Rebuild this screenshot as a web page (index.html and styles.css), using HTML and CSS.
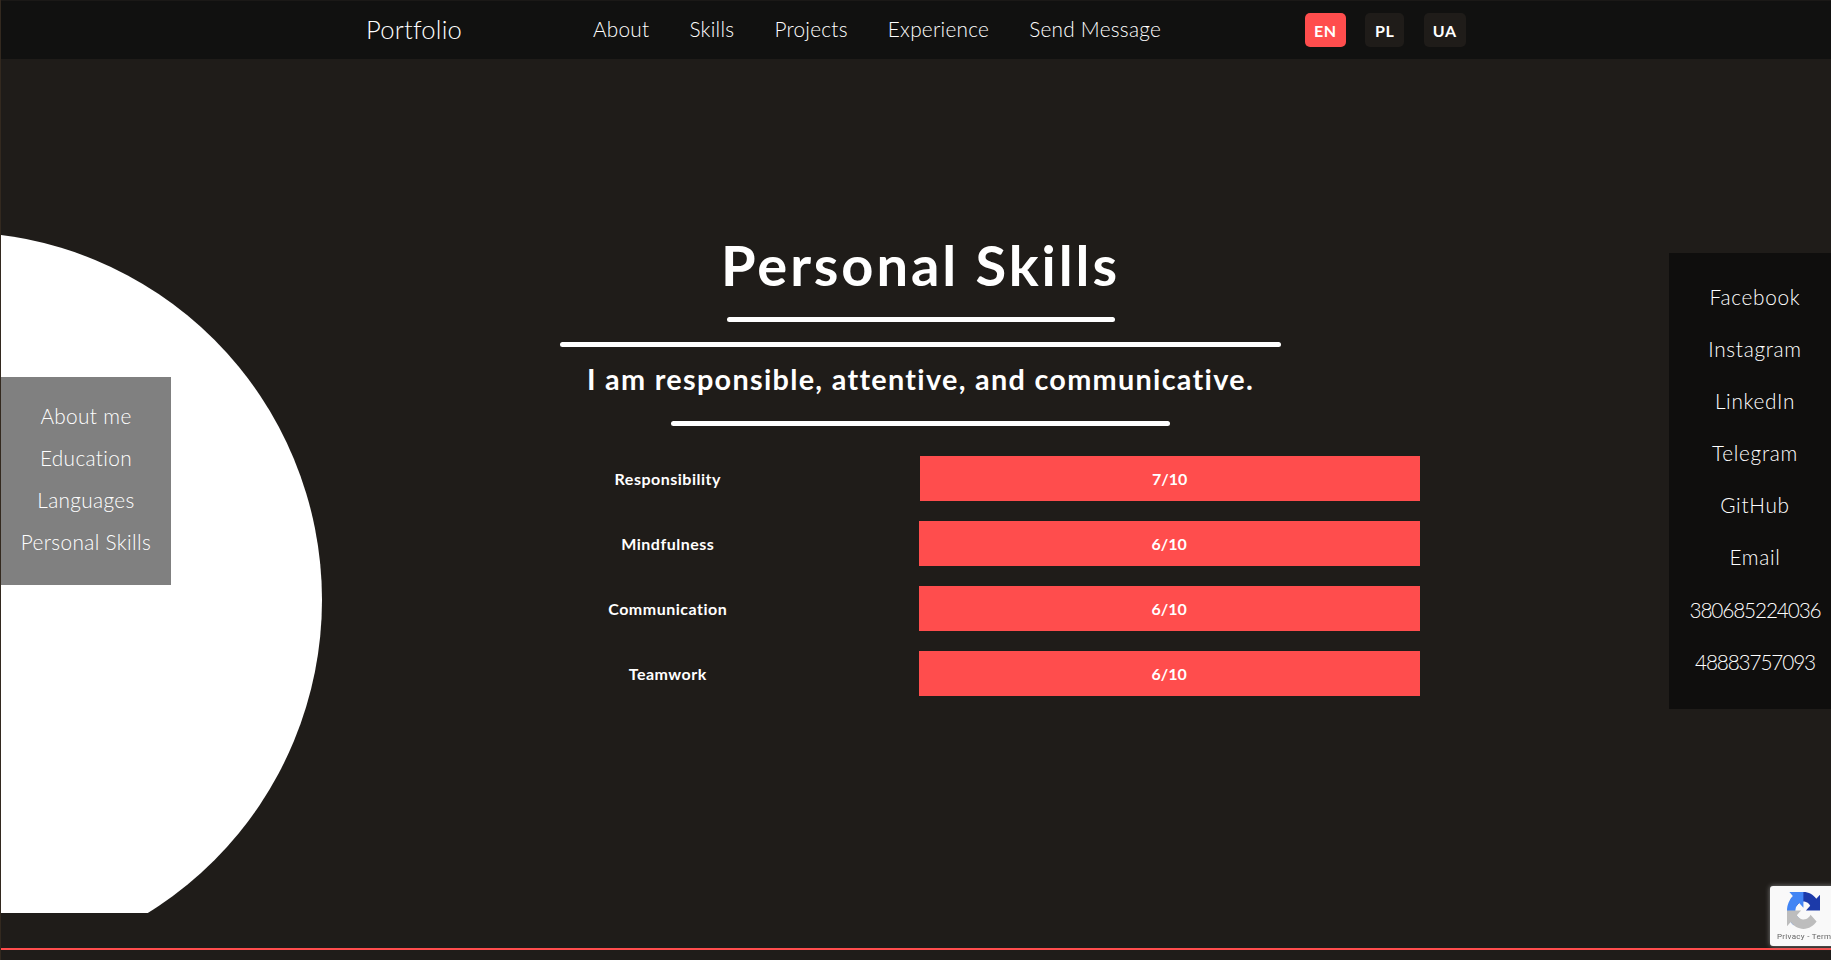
FILE: index.html
```html
<!DOCTYPE html>
<html lang="en">
  <head>
    <meta charset="UTF-8" />
    <meta name="viewport" content="width=device-width, initial-scale=1.0" />
    <title>Portfolio</title>
    <link rel="stylesheet" href="styles.css">
  </head>
  <body>
    <header class="navbar">
      <a class="brand" href="#">Portfolio</a>
      <nav class="nav-links">
        <a href="#">About</a>
        <a href="#">Skills</a>
        <a href="#">Projects</a>
        <a href="#">Experience</a>
        <a href="#">Send Message</a>
      </nav>
      <div class="lang-switch">
        <button class="lang-btn lang-active">EN</button>
        <button class="lang-btn">PL</button>
        <button class="lang-btn">UA</button>
      </div>
    </header>

    <main class="content">
      <div class="circle-clip"><div class="circle"></div></div>

      <aside class="side-menu">
        <a href="#">About me</a>
        <a href="#">Education</a>
        <a href="#">Languages</a>
        <a href="#">Personal Skills</a>
      </aside>

      <section class="skills">
        <div class="skills-head">
          <h1 class="skills-title">Personal Skills</h1>
          <hr class="rule rule-title" />
          <hr class="rule rule-wide" />
          <h2 class="skills-sub">I am responsible, attentive, and communicative.</h2>
          <hr class="rule rule-sub" />
        </div>
        <div class="skill-table">
          <div class="skill-row">
            <div class="skill-name">Responsibility</div>
            <div class="skill-bar">7/10</div>
          </div>
          <div class="skill-row">
            <div class="skill-name">Mindfulness</div>
            <div class="skill-bar">6/10</div>
          </div>
          <div class="skill-row">
            <div class="skill-name">Communication</div>
            <div class="skill-bar">6/10</div>
          </div>
          <div class="skill-row">
            <div class="skill-name">Teamwork</div>
            <div class="skill-bar">6/10</div>
          </div>
        </div>
      </section>

      <aside class="contacts">
        <a href="#">Facebook</a>
        <a href="#">Instagram</a>
        <a href="#">LinkedIn</a>
        <a href="#">Telegram</a>
        <a href="#">GitHub</a>
        <a href="#">Email</a>
        <a class="phone" href="#">380685224036</a>
        <a class="phone" href="#">48883757093</a>
      </aside>
    </main>

    <footer class="footer"></footer>

    <div class="recaptcha">
      <svg class="recaptcha-logo" viewBox="0 0 64 64" preserveAspectRatio="none">
        <path fill="#1c3aa9" d="M64 31.955l-.033-1.37V4.687l-7.16 7.16C50.948 4.674 42.033.093 32.05.093c-10.4 0-19.622 4.96-25.458 12.64l11.736 11.86a15.55 15.55 0 0 1 4.754-5.334c2.05-1.6 4.952-2.906 8.968-2.906.485 0 .86.057 1.135.163 4.976.393 9.288 3.14 11.828 7.124l-8.307 8.307c10.52-.04 22.4-.066 27.295.003" />
        <path fill="#4285f4" d="M31.862.001l-1.37.033H4.594l7.16 7.16C4.58 13.053 0 21.968 0 31.95c0 10.4 4.96 19.622 12.64 25.458L24.5 45.672a15.55 15.55 0 0 1-5.334-4.754c-1.6-2.05-2.906-4.952-2.906-8.968 0-.485.057-.86.163-1.135.393-4.976 3.14-9.288 7.124-11.828l8.307 8.307c-.04-10.52-.066-22.4.003-27.295" />
        <path fill="#bdbdbd" d="M.001 32l.033 1.37v25.898l7.16-7.16c5.86 7.173 14.774 11.754 24.757 11.754 10.4 0 19.622-4.96 25.458-12.64l-11.736-11.86a15.55 15.55 0 0 1-4.754 5.334c-2.05 1.6-4.952 2.906-8.968 2.906-.485 0-.86-.057-1.135-.163-4.976-.393-9.288-3.14-11.828-7.124l8.307-8.307c-10.52.04-22.4.066-27.295-.003" />
      </svg>
      <span class="recaptcha-text">Privacy - Terms</span>
    </div>
  </body>
</html>
```

FILE: styles.css
```css
* {
  box-sizing: border-box;
}
html,
body {
  margin: 0;
  height: 100%;
}
body {
  background-color: #1f1c19;
  color: #ffffff;
  font-family: Lato, 'Noto Sans', sans-serif;
  font-weight: 300;
  overflow: hidden;
  display: flex;
  flex-direction: column;
  border-left: 1px solid #33291f;
}
a {
  color: inherit;
  text-decoration: none;
}

.navbar {
  flex: none;
  height: 59px;
  background-color: #111110;
  border-top: 1px solid #1b1917;
  display: flex;
  align-items: center;
  padding-left: 365px;
}
.brand {
  width: 227px;
  font-size: 25.6px;
  letter-spacing: 0.2px;
  margin-top: -2px;
}
.nav-links {
  display: flex;
  gap: 40px;
  width: 712px;
  font-size: 20.8px;
  letter-spacing: 0.25px;
  margin-top: -4px;
}
.lang-switch {
  display: flex;
  gap: 19.5px;
}
.lang-btn {
  height: 34px;
  min-width: 39px;
  padding: 0 9px;
  border: none;
  border-radius: 5px;
  background-color: #1f1c19;
  color: #ffffff;
  font: 700 16px Lato, sans-serif;
  letter-spacing: 0.6px;
}
.lang-active {
  background-color: #ff4d4d;
}

.content {
  flex: none;
  height: 889px;
  position: relative;
  display: flex;
  justify-content: center;
}
.circle-clip {
  position: absolute;
  left: 0;
  top: 0;
  width: 400px;
  height: 854px;
  overflow: hidden;
}
.circle {
  position: absolute;
  left: -414px;
  top: 173px;
  width: 735px;
  height: 736px;
  border-radius: 50%;
  background-color: #ffffff;
}
.side-menu {
  position: absolute;
  left: 0;
  top: 318px;
  width: 170px;
  height: 208px;
  padding-top: 18px;
  background-color: #808080;
  display: flex;
  flex-direction: column;
  align-items: center;
  font-size: 20.8px;
  letter-spacing: 0.35px;
}
.side-menu a {
  height: 42px;
  line-height: 42px;
}
.contacts {
  position: absolute;
  right: 0;
  top: 194px;
  width: 162px;
  height: 456px;
  padding: 18px 0 0 10px;
  background-color: #0f0e0d;
  display: flex;
  flex-direction: column;
  align-items: center;
  font-size: 20.8px;
  letter-spacing: 0.7px;
}
.contacts a {
  height: 52.1px;
  line-height: 52.1px;
}
.contacts .phone {
  letter-spacing: -1.15px;
}

.skills {
  width: 1003px;
  padding-top: 170px;
  margin-left: 5px;
  display: flex;
  flex-direction: column;
  position: relative;
}
.skills-head {
  margin-left: 4px;
  display: flex;
  flex-direction: column;
  align-items: center;
}
.skills-title {
  margin: 0;
  font-size: 56px;
  font-weight: 700;
  letter-spacing: 2.9px;
  line-height: 72px;
  height: 78px;
}
.rule {
  height: 5px;
  margin: 0;
  border: none;
  border-radius: 3px;
  background-color: #ffffff;
}
.rule-title {
  width: 388px;
  margin-top: 10px;
}
.rule-wide {
  width: 721px;
  margin-top: 20px;
}
.rule-sub {
  width: 499px;
}
.skills-sub {
  margin: 0;
  height: 74px;
  line-height: 64px;
  font-size: 28.8px;
  font-weight: 700;
  letter-spacing: 1.3px;
}
.skill-table {
  width: 100%;
  margin-top: 30px;
  display: flex;
  flex-direction: column;
  gap: 20px;
}
.skill-row {
  display: grid;
  grid-template-columns: 1fr 1fr;
  height: 45px;
  align-items: center;
  text-align: center;
  font-size: 16px;
  font-weight: 700;
}
.skill-name {
  letter-spacing: 0.5px;
}
.skill-bar {
  height: 45px;
  line-height: 45px;
  background-color: #ff4d4d;
}
.skill-row:first-child .skill-bar {
  margin-left: 1px;
}

.footer {
  flex: none;
  border-top: 2px solid #ff4d4d;
  height: 12px;
  position: fixed;
  left: 1px;
  right: 0;
  bottom: 0;
}

.recaptcha {
  position: fixed;
  left: 1770px;
  top: 886px;
  width: 256px;
  height: 60px;
  border-radius: 3px;
  background-color: #f9f9f9;
  box-shadow: 0 0 5px #808080;
  overflow: hidden;
}
.recaptcha-logo {
  position: absolute;
  left: 17px;
  top: 6px;
  width: 33px;
  height: 37px;
}
.recaptcha-text {
  position: absolute;
  left: 7px;
  top: 45px;
  font: 400 8px/12px Roboto, sans-serif;
  color: #666666;
  letter-spacing: 0.3px;
}
```
